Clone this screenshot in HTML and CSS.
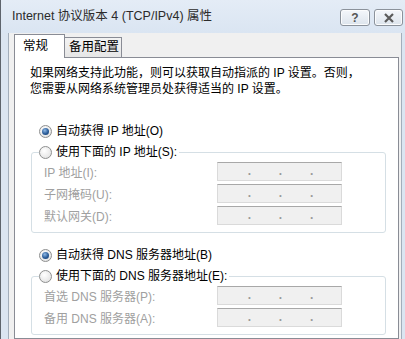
FILE: index.html
```html
<!DOCTYPE html>
<html lang="zh-CN">
<head>
  <meta charset="UTF-8">
  <title>Internet 协议版本 4 (TCP/IPv4) 属性</title>
  <link rel="stylesheet" href="styles.css">
</head>
<body>
  <div class="window">
    <div class="titlebar">
      <span class="title">Internet 协议版本 4 (TCP/IPv4) 属性</span>
      <div class="caption">
        <span class="cap-btn">?</span>
        <span class="cap-btn close">
          <svg width="12" height="10" viewBox="0 0 12 10"><path d="M2 1 L10 9 M10 1 L2 9" stroke="#5a5a5a" stroke-width="2.2" fill="none"/></svg>
        </span>
      </div>
    </div>
    <div class="frame">
      <div class="client">
        <div class="tabs">
          <div class="tab active">常规</div>
          <div class="tab">备用配置</div>
        </div>
        <div class="panel">
          <p class="intro">如果网络支持此功能，则可以获取自动指派的 IP 设置。否则，<br>您需要从网络系统管理员处获得适当的 IP 设置。</p>

          <div class="option first"><span class="radio checked"></span>自动获得 IP 地址(O)</div>
          <fieldset class="group">
            <legend><span class="option"><span class="radio"></span>使用下面的 IP 地址(S):</span></legend>
            <div class="row"><span class="label">IP 地址(I):</span><span class="ipbox"><i>.</i><i>.</i><i>.</i></span></div>
            <div class="row"><span class="label">子网掩码(U):</span><span class="ipbox"><i>.</i><i>.</i><i>.</i></span></div>
            <div class="row"><span class="label">默认网关(D):</span><span class="ipbox"><i>.</i><i>.</i><i>.</i></span></div>
          </fieldset>

          <div class="option second"><span class="radio checked"></span>自动获得 DNS 服务器地址(B)</div>
          <fieldset class="group">
            <legend><span class="option"><span class="radio"></span>使用下面的 DNS 服务器地址(E):</span></legend>
            <div class="row"><span class="label">首选 DNS 服务器(P):</span><span class="ipbox"><i>.</i><i>.</i><i>.</i></span></div>
            <div class="row"><span class="label">备用 DNS 服务器(A):</span><span class="ipbox"><i>.</i><i>.</i><i>.</i></span></div>
          </fieldset>
        </div>
      </div>
    </div>
  </div>
</body>
</html>
```

FILE: styles.css
```css
* {
  margin: 0;
  padding: 0;
  box-sizing: border-box;
}
body {
  font-family: "Liberation Sans", "Noto Sans CJK SC", sans-serif;
  font-size: 12px;
  color: #000;
  background: #fff;
}
.window {
  width: 405px;
  height: 339px;
  display: flex;
  flex-direction: column;
  background: #dbe5f1;
  border-left: 1px solid #5e646c;
  overflow: hidden;
}
.titlebar {
  height: 33px;
  flex: none;
  display: flex;
  justify-content: space-between;
  align-items: flex-start;
  background: linear-gradient(#e4ecf6, #dae5f2);
}
.title {
  padding: 8px 0 0 11px;
  font-size: 12.5px;
  color: #2b2b2b;
  line-height: 16px;
}
.caption {
  display: flex;
  gap: 4px;
  margin: 9px 2px 0 0;
}
.cap-btn {
  width: 30px;
  height: 17px;
  display: flex;
  align-items: center;
  justify-content: center;
  border: 1px solid #8b929b;
  border-radius: 3px;
  background: linear-gradient(#f4f7fb, #dde4ec);
  color: #555;
  font-size: 12px;
  font-weight: bold;
  box-shadow: inset 0 0 0 1px #fbfcfd;
}
.cap-btn.close {
  width: 29px;
}
.frame {
  flex: 1;
  display: flex;
  padding: 0 3px 0 7px;
}
.client {
  flex: 1;
  display: flex;
  flex-direction: column;
  background: #f0f0f0;
  border-left: 1px solid #a3aebb;
  border-right: 1px solid #a3aebb;
  padding: 1px 2px 0 5px;
}
.tabs {
  display: flex;
  align-items: flex-end;
  height: 23px;
}
.tab {
  height: 20px;
  padding: 0 4px;
  line-height: 18px;
  white-space: nowrap;
  border: 1px solid #898c95;
  border-bottom: none;
  background: linear-gradient(#f3f3f3, #e6e6e6);
}
.tab + .tab {
  border-left: none;
  width: 57px;
  font-size: 12.5px;
}
.tab.active {
  width: 51px;
  height: 24px;
  margin-bottom: -1px;
  padding-left: 8px;
  font-size: 12.5px;
  line-height: 22px;
  background: #fff;
  position: relative;
  z-index: 1;
}
.panel {
  flex: 1;
  background: #fff;
  border: 1px solid #898c95;
  padding: 7px 11px 0 15px;
}
.intro {
  line-height: 16px;
}
.option {
  display: flex;
  align-items: center;
  gap: 4px;
  height: 16px;
  line-height: 16px;
  margin-left: 9px;
  white-space: nowrap;
}
.option.first {
  margin-top: 26px;
}
.option.second {
  margin-top: 14px;
}
legend .option {
  margin-left: 0;
  padding-right: 2px;
  background: #fff;
}
.radio {
  width: 13px;
  height: 13px;
  flex: none;
  border-radius: 50%;
  border: 1px solid #8e8f8f;
  background: radial-gradient(circle at 40% 35%, #ffffff, #dcdcdc);
  display: flex;
  align-items: center;
  justify-content: center;
}
.radio.checked::after {
  content: "";
  width: 7px;
  height: 7px;
  border-radius: 50%;
  background: radial-gradient(circle at 40% 35%, #8fb9e6, #2a5c98 55%, #143a6a);
}
.group {
  margin: 5px 1px 0 1px;
  border: 1px solid #d5dfe5;
  border-radius: 3px;
  padding: 2px 0 7px 12px;
}
.group legend {
  margin-left: -5px;
  padding: 0;
}
.row {
  display: flex;
  align-items: center;
  height: 19px;
  margin-top: 3px;
  color: #a0a0a0;
}
.row:first-of-type {
  margin-top: 0;
}
.label {
  width: 173px;
  flex: none;
}
.ipbox {
  width: 125px;
  height: 19px;
  display: flex;
  justify-content: space-evenly;
  padding: 0 0 0 2px;
  background: #f0f0f0;
  border: 1px solid #dadada;
  border-top-color: #a8a8a8;
}
.ipbox i {
  font-style: normal;
  color: #9a9a9a;
  line-height: 17px;
  font-weight: bold;
}
```
